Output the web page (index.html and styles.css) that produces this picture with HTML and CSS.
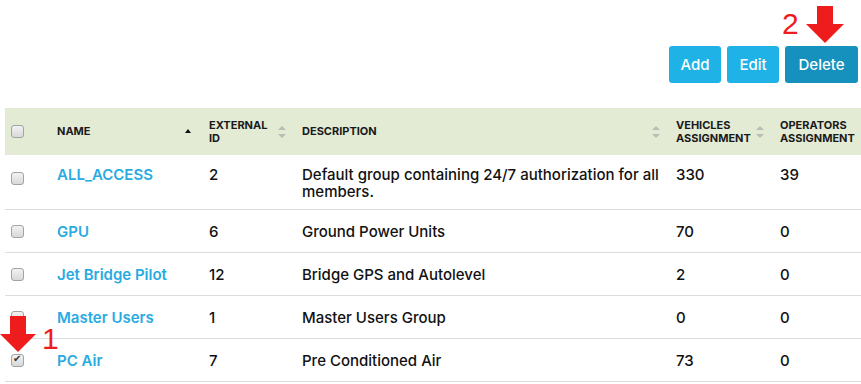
FILE: index.html
```html
<!doctype html>
<html>

<head>
	<meta charset="utf-8">
	<link rel="stylesheet" href="styles.css">
	<title>Groups</title>
</head>

<body>
	<div class="page">
		<div class="toolbar">
			<button class="btn">Add</button>
			<button class="btn">Edit</button>
			<button class="btn btnDark">Delete</button>
		</div>

		<table class="grid">
			<colgroup>
				<col class="cCheck">
				<col class="cName">
				<col class="cExt">
				<col class="cDesc">
				<col class="cVeh">
				<col class="cOp">
			</colgroup>
			<thead>
				<tr>
					<th class="chk"><input type="checkbox" class="box"></th>
					<th><div class="head">NAME<span class="sortUp"></span></div></th>
					<th><div class="head">EXTERNAL<br>ID<span class="sortBoth"></span></div></th>
					<th><div class="head">DESCRIPTION<span class="sortBoth"></span></div></th>
					<th><div class="head">VEHICLES<br>ASSIGNMENT<span class="sortBoth"></span></div></th>
					<th><div class="head">OPERATORS<br>ASSIGNMENT<span class="sortBoth"></span></div></th>
				</tr>
			</thead>
			<tbody>
				<tr class="tall">
					<td class="chk"><input type="checkbox" class="box"></td>
					<td><a href="#" class="name">ALL_ACCESS</a></td>
					<td>2</td>
					<td>Default group containing 24/7 authorization for all members.</td>
					<td>330</td>
					<td>39</td>
				</tr>
				<tr>
					<td class="chk"><input type="checkbox" class="box"></td>
					<td><a href="#" class="name">GPU</a></td>
					<td>6</td>
					<td>Ground Power Units</td>
					<td>70</td>
					<td>0</td>
				</tr>
				<tr>
					<td class="chk"><input type="checkbox" class="box"></td>
					<td><a href="#" class="name">Jet Bridge Pilot</a></td>
					<td>12</td>
					<td>Bridge GPS and Autolevel</td>
					<td>2</td>
					<td>0</td>
				</tr>
				<tr>
					<td class="chk"><input type="checkbox" class="box"></td>
					<td><a href="#" class="name">Master Users</a></td>
					<td>1</td>
					<td>Master Users Group</td>
					<td>0</td>
					<td>0</td>
				</tr>
				<tr>
					<td class="chk"><input type="checkbox" class="box" checked></td>
					<td><a href="#" class="name">PC Air</a></td>
					<td>7</td>
					<td>Pre Conditioned Air</td>
					<td>73</td>
					<td>0</td>
				</tr>
			</tbody>
		</table>
	</div>

	<!-- step annotations drawn over the screen -->
	<div class="note note2">
		<span class="num">2</span>
		<svg class="arrow" width="40" height="38" viewBox="0 0 40 38"><path d="M12 0H28V18H39L20 37L1 18H12Z" fill="#ee1c1c"/></svg>
	</div>
	<div class="note note1">
		<svg class="arrow" width="36" height="37" viewBox="0 0 36 37"><path d="M10 0H26V18H36L18 36L0 18H10Z" fill="#ee1c1c"/></svg>
		<span class="num">1</span>
	</div>
</body>

</html>
```

FILE: styles.css
```css
body {
	margin: 0;
	font-family: Inter, "Liberation Sans", sans-serif;
	color: #111;
	background: #fff;
}

.page {
	width: 861px;
	overflow: hidden;
}

.toolbar {
	display: flex;
	justify-content: flex-end;
	gap: 6px;
	padding: 46px 3px 25px 0;
}

.btn {
	width: 52px;
	height: 37px;
	padding: 0;
	border: 0;
	border-radius: 3px;
	background: #1eb2e6;
	color: #fff;
	font-family: inherit;
	font-size: 15px;
	font-weight: 500;
}

.btnDark {
	width: 73px;
	background: #1690bd;
}

.grid {
	margin-left: 5px;
	width: 872px;
	border-collapse: collapse;
	table-layout: fixed;
}

.cCheck { width: 40px; }
.cName { width: 152px; }
.cExt { width: 93px; }
.cDesc { width: 374px; }
.cVeh { width: 104px; }
.cOp { width: 109px; }

thead th {
	background: #e3ebd5;
	height: 47px;
	padding: 0 0 0 12px;
	text-align: left;
	font-size: 11px;
	font-weight: 700;
	line-height: 13px;
	color: #1a1a1a;
}

.head {
	position: relative;
	padding-right: 16px;
}

.sortUp {
	position: absolute;
	right: 6px;
	top: 50%;
	margin-top: -3px;
	border-left: 3.5px solid transparent;
	border-right: 3.5px solid transparent;
	border-bottom: 4px solid #111;
}

.sortBoth {
	position: absolute;
	right: 4px;
	top: 50%;
	margin-top: -6px;
	width: 8px;
	height: 12px;
}

.sortBoth::before,
.sortBoth::after {
	content: "";
	position: absolute;
	left: 0;
	border-left: 4px solid transparent;
	border-right: 4px solid transparent;
}

.sortBoth::before {
	top: 0;
	border-bottom: 4px solid #b9bdb4;
}

.sortBoth::after {
	bottom: 0;
	border-top: 4px solid #b9bdb4;
}

tbody td {
	height: 42px;
	padding: 0 0 0 12px;
	border-bottom: 1px solid #dcdcdc;
	font-size: 15px;
	font-weight: 500;
	line-height: 17px;
	color: #111;
}

tbody tr.tall td {
	height: 43px;
	vertical-align: top;
	padding-top: 11px;
}

tbody tr.tall td.chk {
	height: 37px;
	padding-top: 17px;
}

th.chk,
td.chk {
	padding-left: 6px;
}

.box {
	-webkit-appearance: none;
	appearance: none;
	display: block;
	margin: 0;
	width: 13px;
	height: 13px;
	border: 1px solid #a3a3a3;
	border-radius: 3px;
	background: linear-gradient(#f2f2f2, #d8d8d8);
	position: relative;
}

.box:checked::after {
	content: "\2714";
	position: absolute;
	left: 1px;
	top: -2px;
	font-size: 10px;
	color: #333;
}

.name {
	color: #29abe2;
	font-weight: 600;
	text-decoration: none;
}

.note {
	position: absolute;
	display: flex;
	align-items: flex-end;
	color: #ee1c1c;
	font-family: "Liberation Sans", sans-serif;
	font-size: 30px;
	line-height: 1;
}

.note2 {
	left: 782px;
	top: 6px;
	gap: 6px;
}

.note2 .num {
	margin-bottom: 5px;
}

.note1 {
	left: 0;
	top: 316px;
	gap: 6px;
}

.note1 .num {
	margin-bottom: -1px;
}
```
